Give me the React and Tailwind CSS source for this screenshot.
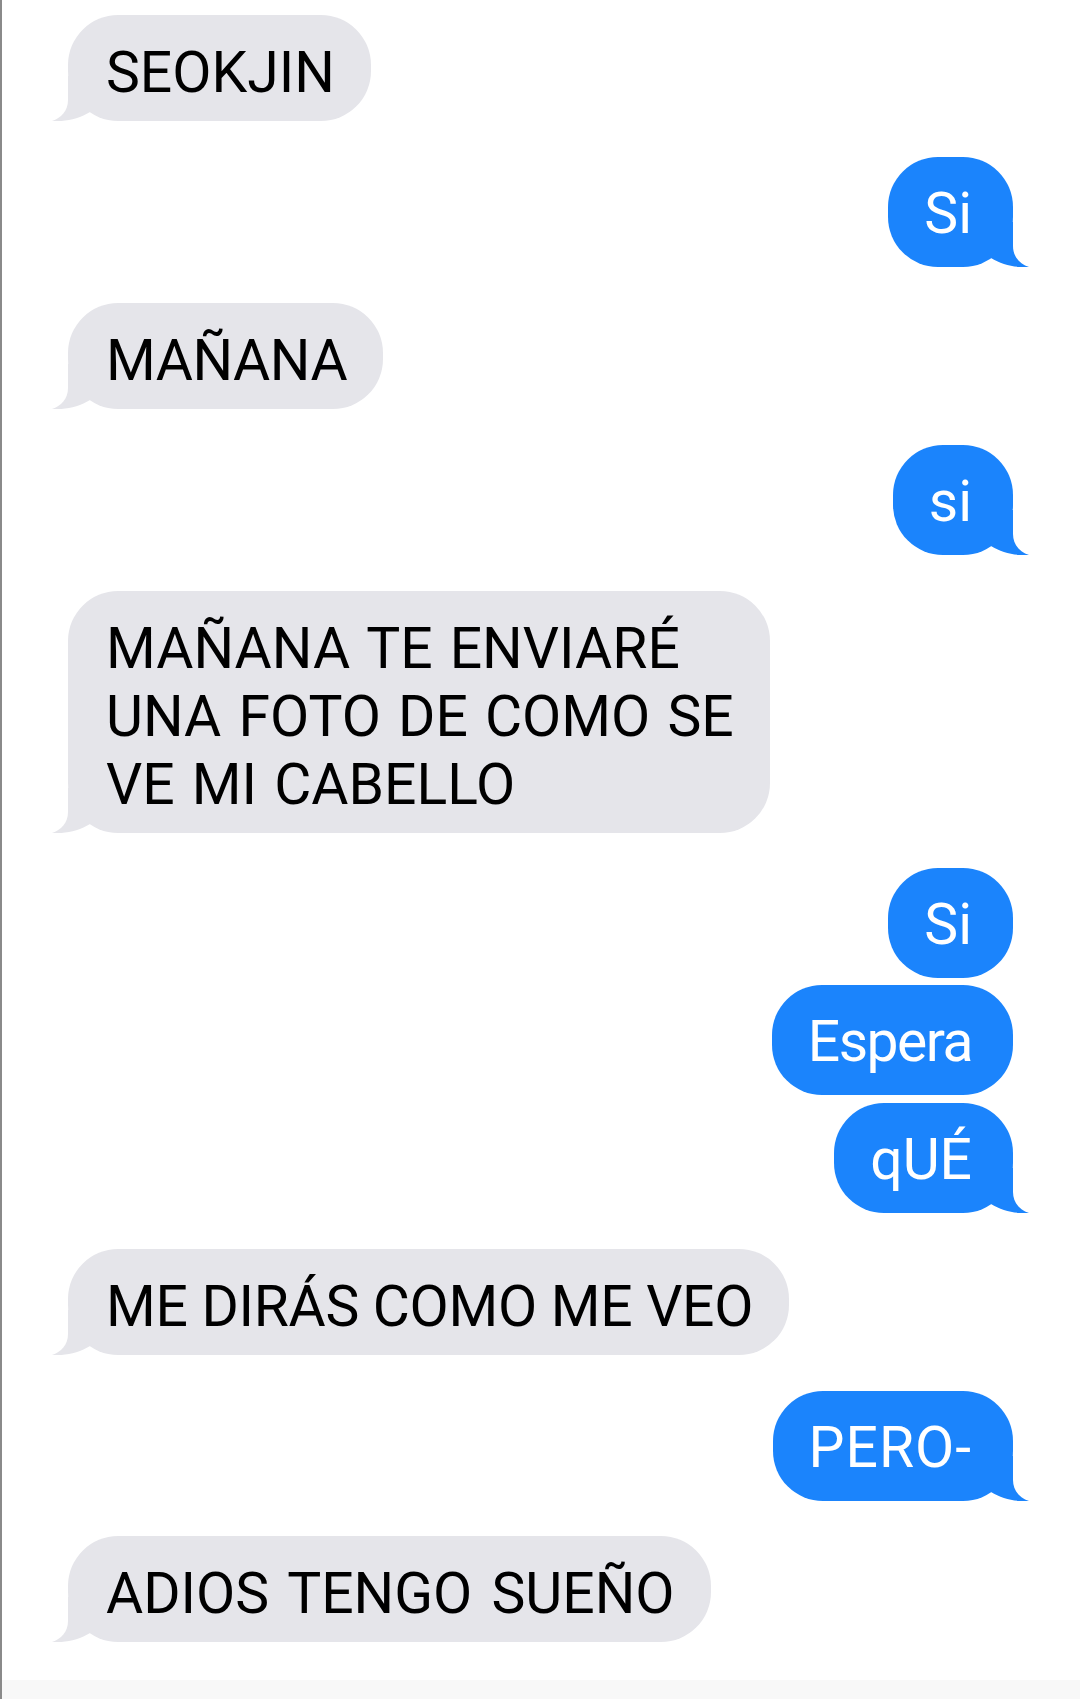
import React from "react";

function GrayTail() {
  return (
    <svg
      className="absolute left-[-16px] bottom-0"
      width="54"
      height="45"
      viewBox="0 0 54 45"
    >
      <path
        d="M16,0 L16,24 C16,35 9,42 0,45 C12,46 27,43 38,36 L38,0 Z"
        fill="#e5e5ea"
      />
    </svg>
  );
}

function BlueTail() {
  return (
    <svg
      className="absolute right-[-16px] bottom-0"
      width="54"
      height="45"
      viewBox="0 0 54 45"
    >
      <path
        d="M38,0 L38,24 C38,35 45,42 54,45 C42,46 27,43 16,36 L16,0 Z"
        fill="#1b84fc"
      />
    </svg>
  );
}

function Gray({ children, tail = true, className = "", textClass = "" }) {
  return (
    <div className={"flex justify-start " + className}>
      <div className="relative rounded-[50px] bg-[#e5e5ea] pl-[38px] pr-[36px] pt-[24px] pb-[14px] text-black whitespace-nowrap">
        {tail && <GrayTail />}
        <span className={"relative " + textClass}>{children}</span>
      </div>
    </div>
  );
}

function Blue({ children, tail = true, className = "", textClass = "" }) {
  return (
    <div className={"flex justify-end " + className}>
      <div className="relative rounded-[50px] bg-[#1b84fc] pl-[36px] pr-[41px] pt-[23px] pb-[19px] text-white whitespace-nowrap">
        {tail && <BlueTail />}
        <span className={"relative " + textClass}>{children}</span>
      </div>
    </div>
  );
}

export default function App() {
  return (
    <div
      className="w-[1080px] min-h-[1699px] bg-white border-l-2 border-[#8a8a8a] flex flex-col text-[57px] leading-[68px]"
      style={{ fontFamily: "Roboto, 'Liberation Sans', Arial, sans-serif" }}
    >
      <div className="flex flex-col pl-[66px] pr-[67px] pt-[15px]">
        <Gray>SEOKJIN</Gray>
        <Blue className="mt-[36px]">Si</Blue>
        <Gray className="mt-[36px]" textClass="tracking-[-0.5px]">MAÑANA</Gray>
        <Blue className="mt-[36px]">si</Blue>
        <Gray className="mt-[36px]" textClass="[word-spacing:3px]">
          MAÑANA TE ENVIARÉ
          <br />
          UNA FOTO DE COMO SE
          <br />
          VE MI CABELLO
        </Gray>
        <Blue className="mt-[35px]" tail={false}>
          Si
        </Blue>
        <Blue className="mt-[7px]" tail={false} textClass="tracking-[-1.5px]">
          Espera
        </Blue>
        <Blue className="mt-[8px]">qUÉ</Blue>
        <Gray className="mt-[36px]" textClass="tracking-[-0.3px]">
          ME DIRÁS COMO ME VEO
        </Gray>
        <Blue className="mt-[36px]" textClass="tracking-[1px]">
          PERO-
        </Blue>
        <Gray className="mt-[35px]" textClass="[word-spacing:5px]">
          ADIOS TENGO SUEÑO
        </Gray>
      </div>
      <div className="flex-1" />
      <div className="h-[19px] bg-[#f8f8f8]" />
    </div>
  );
}
